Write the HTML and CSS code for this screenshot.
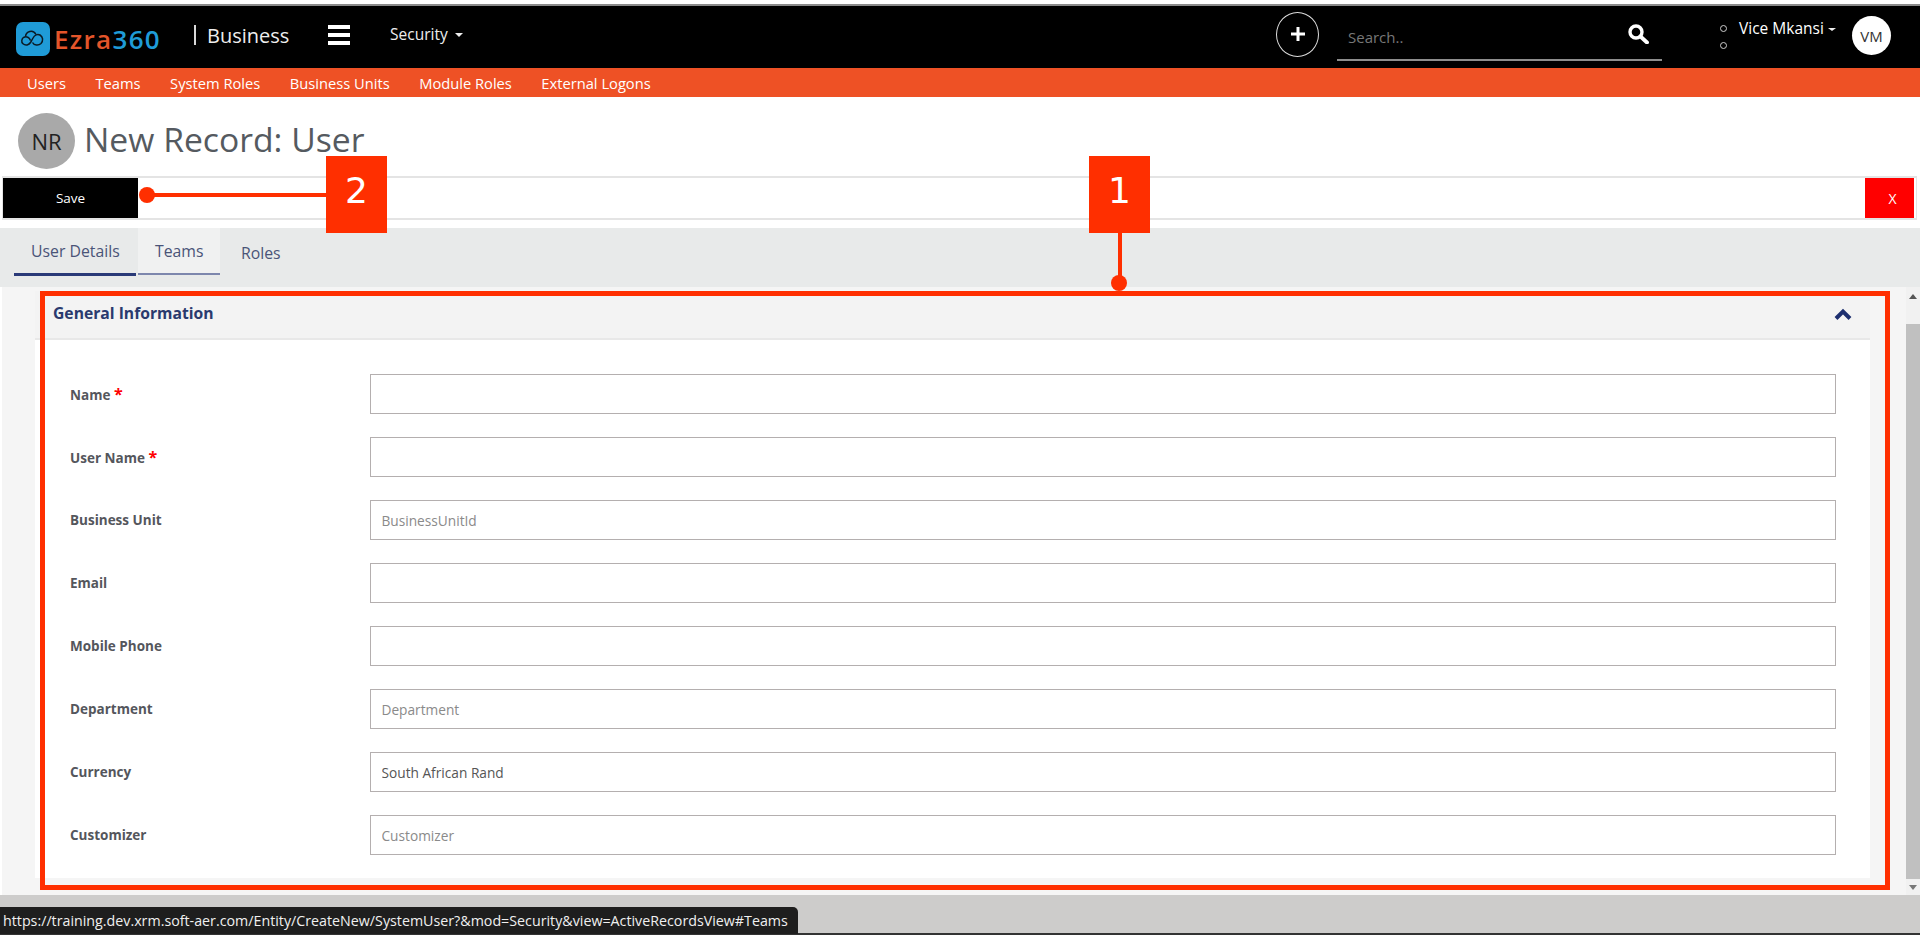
FILE: index.html
```html
<!DOCTYPE html>
<html lang="en">
<head>
    <meta charset="UTF-8">
    <meta name="viewport" content="width=device-width, initial-scale=1.0">
    <title>New Record: User</title>
    <link rel="stylesheet" href="styles.css">
</head>
<body>

    <div class="top-strip"></div>

    <!-- Main header -->
    <header class="app-header">
        <a class="logo" href="#">
            <svg class="logo-icon" width="34" height="34" viewBox="0 0 34 34">
                <rect width="34" height="34" rx="7" fill="#1f9bd7"/>
                <path d="M9.5 14.5C10 9.5 17 7 20 12.5" fill="none" stroke="#0b1a24" stroke-width="1.5"/>
                <path d="M14.5 18.5C13.5 15.5 10.5 14 8 15.2C5.5 16.5 5 20 7 21.8C9.5 24 13 23 14.5 20.5L17 16C18.500 13 21.500 11.500 24 13C27 14.800 27.500 18.800 25 21.500C22.500 24 18 23.500 16.500 20.500" fill="none" stroke="#0b1a24" stroke-width="1.5"/>
            </svg>
            <span class="logo-text"><span class="logo-ezra">Ezra</span><span class="logo-num">360</span></span>
        </a>
        <span class="business"><span class="business-bar"></span>Business</span>
        <div class="hamburger"><span></span><span></span><span></span></div>
        <span class="module-menu">Security<i class="caret"></i></span>

        <div class="header-right">
            <button class="add-btn" type="button">
                <svg width="16" height="16" viewBox="0 0 16 16"><path d="M8 1V15M1 8H15" stroke="#fff" stroke-width="3"/></svg>
            </button>
            <div class="search-box">
                <input class="search-input" type="text" placeholder="Search..">
                <svg class="search-icon" width="22" height="20" viewBox="0 0 22 20">
                    <circle cx="9" cy="8" r="6" fill="none" stroke="#fff" stroke-width="3.400"/>
                    <path d="M13.500 12.500L20 18.500" stroke="#fff" stroke-width="3.800" stroke-linecap="round"/>
                </svg>
            </div>
            <ul class="user-dots"><li></li><li></li></ul>
            <span class="user-name">Vice Mkansi<i class="caret caret-small"></i></span>
            <span class="user-avatar">VM</span>
        </div>
    </header>

    <nav class="sub-nav">
        <a href="#">Users</a>
        <a href="#">Teams</a>
        <a href="#">System Roles</a>
        <a href="#">Business Units</a>
        <a href="#">Module Roles</a>
        <a href="#">External Logons</a>
    </nav>

    <div class="title-row">
        <span class="record-avatar">NR</span>
        <h1>New Record: User</h1>
    </div>

    <div class="toolbar">
        <button class="save-btn" type="button">Save</button>
        <button class="close-btn" type="button">X</button>
    </div>

    <div class="tabs">
        <a class="tab tab-active" href="#">User Details</a>
        <a class="tab tab-hover" href="#">Teams</a>
        <a class="tab tab-plain" href="#">Roles</a>
    </div>

    <div class="content">
        <main class="content-main">
            <section class="panel">
                <div class="panel-head">
                    <h2>General Information</h2>
                    <svg class="chevron" width="18" height="13" viewBox="0 0 18 13"><path d="M2 10.500L9 3.500L16 10.500" fill="none" stroke="#1d2f6f" stroke-width="4"/></svg>
                </div>
                <form class="panel-body">
                    <div class="form-row">
                        <label for="name">Name <span class="req">*</span></label>
                        <input id="name" type="text">
                    </div>
                    <div class="form-row">
                        <label for="username">User Name <span class="req">*</span></label>
                        <input id="username" type="text">
                    </div>
                    <div class="form-row">
                        <label for="unit">Business Unit</label>
                        <input id="unit" type="text" placeholder="BusinessUnitId">
                    </div>
                    <div class="form-row">
                        <label for="email">Email</label>
                        <input id="email" type="text">
                    </div>
                    <div class="form-row">
                        <label for="mobile">Mobile Phone</label>
                        <input id="mobile" type="text">
                    </div>
                    <div class="form-row">
                        <label for="department">Department</label>
                        <input id="department" type="text" placeholder="Department">
                    </div>
                    <div class="form-row">
                        <label for="currency">Currency</label>
                        <input id="currency" type="text" value="South African Rand">
                    </div>
                    <div class="form-row">
                        <label for="customizer">Customizer</label>
                        <input id="customizer" type="text" placeholder="Customizer">
                    </div>
                </form>
            </section>
        </main>
        <div class="scrollbar">
            <span class="arrow-up"></span>
            <span class="thumb"></span>
            <span class="arrow-down"></span>
        </div>
    </div>

    <div class="bottom-bar"></div>
    <div class="bottom-edge"></div>

    <!-- Annotations on top of the page -->
    <div class="mark-frame"></div>
    <div class="mark-box mark-box-1">1</div>
    <div class="mark-line-v"></div>
    <div class="mark-dot mark-dot-1"></div>
    <div class="mark-box mark-box-2">2</div>
    <div class="mark-line-h"></div>
    <div class="mark-dot mark-dot-2"></div>

    <div class="link-tip">https://training.dev.xrm.soft-aer.com/Entity/CreateNew/SystemUser?&amp;mod=Security&amp;view=ActiveRecordsView#Teams</div>

</body>
</html>
```

FILE: styles.css
```css
* {
    margin: 0;
    padding: 0;
    box-sizing: border-box;
    font-family: 'Open Sans', sans-serif;
}
html, body {
    height: 940px;
    overflow: hidden;
}
body {
    background-color: #fff;
    color: #555;
    display: flex;
    flex-direction: column;
    position: relative;
}
a {
    text-decoration: none;
}
.top-strip {
    height: 6px;
    flex: none;
    background-color: #fff;
    border-bottom: 2px solid #8a8a8a;
    padding-top: 4px;
}

/* header */
.app-header {
    height: 62px;
    flex: none;
    background-color: #000;
    color: #fff;
    display: flex;
    align-items: center;
    padding-left: 16px;
}
.logo {
    display: flex;
    align-items: center;
    gap: 4px;
    width: 178px;
    margin-top: 4px;
}
.logo-icon {
    flex: none;
}
.logo-text {
    font-size: 26px;
    font-weight: 600;
    letter-spacing: 1.3px;
}
.logo-ezra {
    color: #e4552a;
}
.logo-num {
    color: #1f9bd7;
}
.business {
    display: flex;
    align-items: center;
    font-size: 20px;
    color: #eee;
    width: 134px;
    margin-top: -4px;
}
.business-bar {
    width: 2px;
    height: 20px;
    background-color: #d8d8d8;
    margin-right: 11px;
}
.hamburger {
    width: 22px;
    display: flex;
    flex-direction: column;
    gap: 4px;
    margin-top: -5px;
}
.hamburger span {
    height: 4px;
    background-color: #fff;
}
.module-menu {
    font-size: 15.5px;
    margin-left: 40px;
    margin-top: -7px;
    color: #eee;
}
.caret {
    display: inline-block;
    border-top: 4px solid #eee;
    border-left: 4px solid transparent;
    border-right: 4px solid transparent;
    margin-left: 7px;
    vertical-align: middle;
}
.caret-small {
    margin-left: 4px;
    border-top-width: 3px;
}
.header-right {
    margin-left: auto;
    margin-top: -6px;
    display: flex;
    align-items: center;
}
.add-btn {
    width: 43px;
    height: 45px;
    border: 1.5px solid #ddd;
    border-radius: 50%;
    background: none;
    display: flex;
    align-items: center;
    justify-content: center;
    margin-right: 1px;
}
.search-box {
    width: 325px;
    height: 47px;
    margin-left: 17px;
    margin-top: 7px;
    border-bottom: 2px solid #8d8d8d;
    display: flex;
    align-items: center;
    padding-left: 11px;
}
.search-input {
    flex: 1;
    background: none;
    border: none;
    outline: none;
    font-size: 15px;
    color: #888;
}
.search-input::placeholder {
    color: #777;
}
.search-icon {
    margin-right: 13px;
    margin-top: -6px;
}
.user-dots {
    list-style: none;
    display: flex;
    flex-direction: column;
    gap: 10px;
    margin-left: 58px;
    margin-top: 6px;
}
.user-dots li {
    width: 7px;
    height: 7px;
    border: 1.5px solid #ccc;
    border-radius: 50%;
}
.user-name {
    font-size: 15.5px;
    margin-left: 12px;
    margin-top: -12px;
    width: 113px;
}
.user-avatar {
    width: 39px;
    height: 39px;
    border-radius: 50%;
    background-color: #fff;
    color: #333;
    font-size: 15px;
    display: flex;
    align-items: center;
    justify-content: center;
    margin-right: 29px;
    margin-top: 3px;
}

/* orange bar */
.sub-nav {
    height: 29px;
    flex: none;
    background-color: #ee5125;
    display: flex;
    align-items: center;
    gap: 29.5px;
    padding-left: 27px;
}
.sub-nav a {
    color: #fff;
    font-size: 14.7px;
}

.title-row {
    height: 79px;
    flex: none;
    display: flex;
    align-items: center;
    padding-left: 18px;
    padding-top: 7px;
}
.record-avatar {
    width: 57px;
    height: 56px;
    border-radius: 50%;
    background-color: #a9a9a9;
    color: #222;
    font-size: 22px;
    display: flex;
    align-items: center;
    justify-content: center;
    margin-top: 2px;
}
h1 {
    font-size: 33.7px;
    font-weight: 400;
    color: #555a60;
    margin-left: 9px;
    margin-top: -3px;
}

.toolbar {
    height: 44px;
    flex: none;
    margin: 0 3px 0 2px;
    border: 1px solid #e4e4e4;
    border-width: 2px 1px;
    display: flex;
    justify-content: space-between;
}
.save-btn, .close-btn {
    border: none;
    color: #fff;
    font-size: 13.5px;
}
.save-btn {
    width: 135px;
    background-color: #000;
}
.close-btn {
    width: 49px;
    background-color: #f00;
    margin-right: 2px;
    padding-left: 6px;
    font-size: 14px;
}

/* tabs */
.tabs {
    height: 59px;
    flex: none;
    margin-top: 8px;
    background-color: #e8eaea;
    display: flex;
    padding-left: 14px;
    gap: 2px;
}
.tab {
    height: 47px;
    padding: 0 16px 0 17px;
    font-size: 15.8px;
    color: #4a5478;
    display: flex;
    align-items: center;
}
.tab-active {
    width: 122px;
    height: 48px;
    border-bottom: 3px solid #2a3a78;
}
.tab-hover {
    width: 82px;
    padding-left: 17px;
    background-color: #f0f1f1;
    border-bottom: 2px solid #7d87ad;
}
.tab-plain {
    padding-left: 19px;
    padding-top: 2px;
}

/* form area */
.content {
    height: 608px;
    flex: none;
    display: flex;
    padding-left: 2px;
}
.content-main {
    flex: 1;
    background-color: #f5f5f5;
    padding: 4px 36px 0 33px;
}
.panel-head {
    height: 49px;
    background-color: #f3f3f3;
    border-bottom: 2px solid #e8e8e8;
    display: flex;
    align-items: center;
    justify-content: space-between;
    padding: 0 18px 4px 18px;
}
h2 {
    font-size: 15.7px;
    font-weight: 700;
    color: #2a3a6e;
}
.chevron {
    margin-top: 3px;
}
.panel-body {
    background-color: #fff;
    padding: 34px 34px 23px 35px;
    display: flex;
    flex-direction: column;
    gap: 23px;
}
.form-row {
    display: flex;
    align-items: center;
    height: 40px;
}
.form-row label {
    width: 300px;
    flex: none;
    font-size: 13.5px;
    font-weight: 700;
    color: #54565c;
}
.req {
    color: #f00;
    font-size: 16px;
}
.form-row input {
    flex: 1;
    height: 40px;
    border: 1.5px solid #b4afaf;
    padding: 0 10.5px;
    font-size: 13.7px;
    color: #555;
    outline: none;
}
.form-row input::placeholder {
    color: #8a8a8a;
}

.scrollbar {
    width: 14px;
    flex: none;
    background-color: #f1f1f1;
    display: flex;
    flex-direction: column;
    align-items: center;
}
.arrow-up, .arrow-down {
    flex: none;
    border-left: 4px solid transparent;
    border-right: 4px solid transparent;
}
.arrow-up {
    border-bottom: 5px solid #555;
    margin: 7px 0 25px;
}
.thumb {
    width: 14px;
    height: 555px;
    flex: none;
    background-color: #c0c0c0;
}
.arrow-down {
    border-top: 5px solid #777;
    margin-top: 6px;
}

.bottom-bar {
    height: 38px;
    flex: none;
    background-color: #cdcccb;
}
.bottom-edge {
    height: 2px;
    flex: none;
    background-color: #333;
}

/* annotations */
.mark-frame {
    position: absolute;
    left: 40px;
    top: 291px;
    width: 1850px;
    height: 599px;
    border: 5px solid #ff2f00;
}
.mark-box {
    position: absolute;
    top: 156px;
    width: 61px;
    height: 77px;
    background-color: #ff2f00;
    color: #fff;
    font-family: 'DejaVu Sans', sans-serif;
    font-size: 36px;
    display: flex;
    align-items: center;
    justify-content: center;
    padding-bottom: 8px;
}
.mark-box-1 {
    left: 1089px;
}
.mark-box-2 {
    left: 326px;
}
.mark-dot {
    position: absolute;
    width: 16px;
    height: 16px;
    border-radius: 50%;
    background-color: #ff2f00;
}
.mark-dot-1 {
    left: 1111px;
    top: 275px;
}
.mark-dot-2 {
    left: 139px;
    top: 187px;
}
.mark-line-v {
    position: absolute;
    left: 1118px;
    top: 233px;
    width: 4px;
    height: 45px;
    background-color: #ff2f00;
}
.mark-line-h {
    position: absolute;
    left: 150px;
    top: 193px;
    width: 176px;
    height: 4px;
    background-color: #ff2f00;
}
.link-tip {
    position: absolute;
    left: 0;
    top: 907px;
    width: 798px;
    height: 27px;
    background-color: #1e1e1e;
    border-radius: 0 5px 0 0;
    color: #f0f0f0;
    font-size: 14.25px;
    line-height: 28px;
    padding-left: 3px;
    white-space: nowrap;
}
```
